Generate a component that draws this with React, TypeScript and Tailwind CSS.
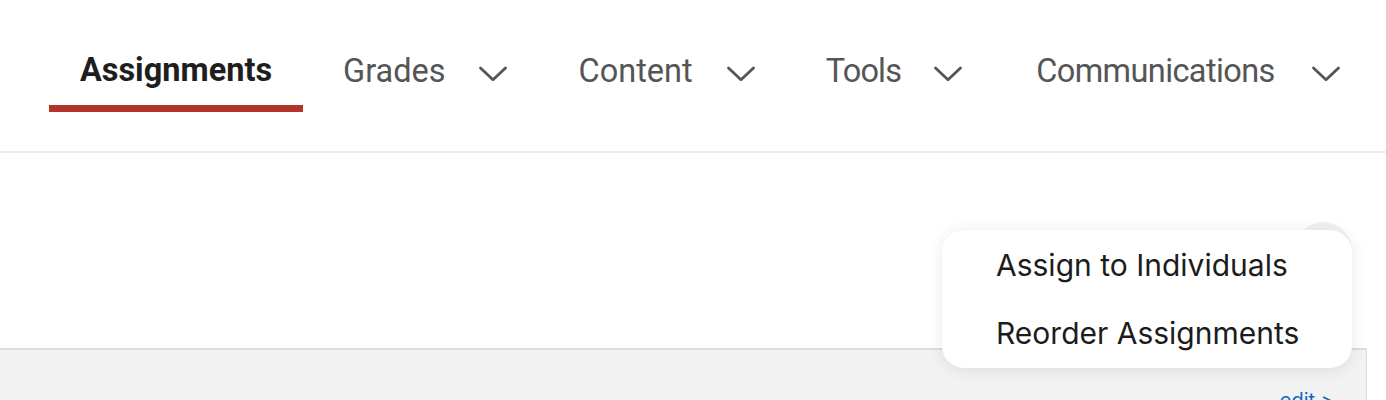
import React from "react";

const Chevron = () => (
  <svg width="30" height="16" viewBox="0 0 30 16" fill="none" className="shrink-0 mt-[5px]">
    <path d="M2.5 2 L15 13.8 L27.5 2" stroke="#555555" strokeWidth="2.8" strokeLinecap="round" strokeLinejoin="round" />
  </svg>
);

const NavDrop = ({ label, cls, tracking }: { label: string; cls: string; tracking: string }) => (
  <div className={`flex items-center h-full ${cls}`}>
    <span className={`text-[#555555] text-[32.5px] leading-none ${tracking}`}>{label}</span>
    <Chevron />
  </div>
);

export default function App() {
  return (
    <div className="w-[1386px] h-[400px] overflow-hidden bg-white relative" style={{ fontFamily: "Roboto, 'Liberation Sans', sans-serif" }}>
      <nav className="h-[153px] border-b-[2px] border-[#ebebf0] flex items-start pl-[49px]">
        <div className="flex flex-col items-center w-[254px] pt-[51px]">
          <span className="text-[#1e1e1e] text-[32.5px] font-bold leading-[38px]">Assignments</span>
          <div className="mt-[16px] h-[7px] w-full bg-[#b1342b]" />
        </div>
        <div className="flex items-center h-[144px] -mt-[1px]">
          <NavDrop label="Grades" cls="ml-[40px] gap-[32px]" tracking="" />
          <NavDrop label="Content" cls="ml-[71px] gap-[33px]" tracking="" />
          <NavDrop label="Tools" cls="ml-[70px] gap-[32px]" tracking="tracking-[-0.8px]" />
          <NavDrop label="Communications" cls="ml-[73px] gap-[36px]" tracking="tracking-[-0.6px]" />
        </div>
      </nav>

      <div className="h-[195px]" />

      <div className="w-[1367px] h-[60px] bg-[#f2f2f2] border-t-[2px] border-r border-[#dcdcdc] flex justify-end pr-[32px] pt-[40px]">
        <span className="text-[#0b6bbf] text-[20px] leading-none" style={{ fontFamily: "Inter, sans-serif" }}>edit &gt;</span>
      </div>

      <div className="absolute left-[1294px] top-[222px] w-[58px] h-[58px] rounded-full bg-[#f1f1f1]" />

      <div
        className="absolute left-[942px] top-[230px] w-[410px] h-[138px] bg-white rounded-[22px] shadow-[0_2px_16px_rgba(0,0,0,0.09)] flex flex-col justify-center pl-[54px] gap-[32px]"
        style={{ fontFamily: "Inter, 'Noto Sans', sans-serif" }}
      >
        <span className="text-[#1c1c1c] text-[30px] leading-[36px]">Assign to Individuals</span>
        <span className="text-[#1c1c1c] text-[30px] leading-[36px]">Reorder Assignments</span>
      </div>
    </div>
  );
}
